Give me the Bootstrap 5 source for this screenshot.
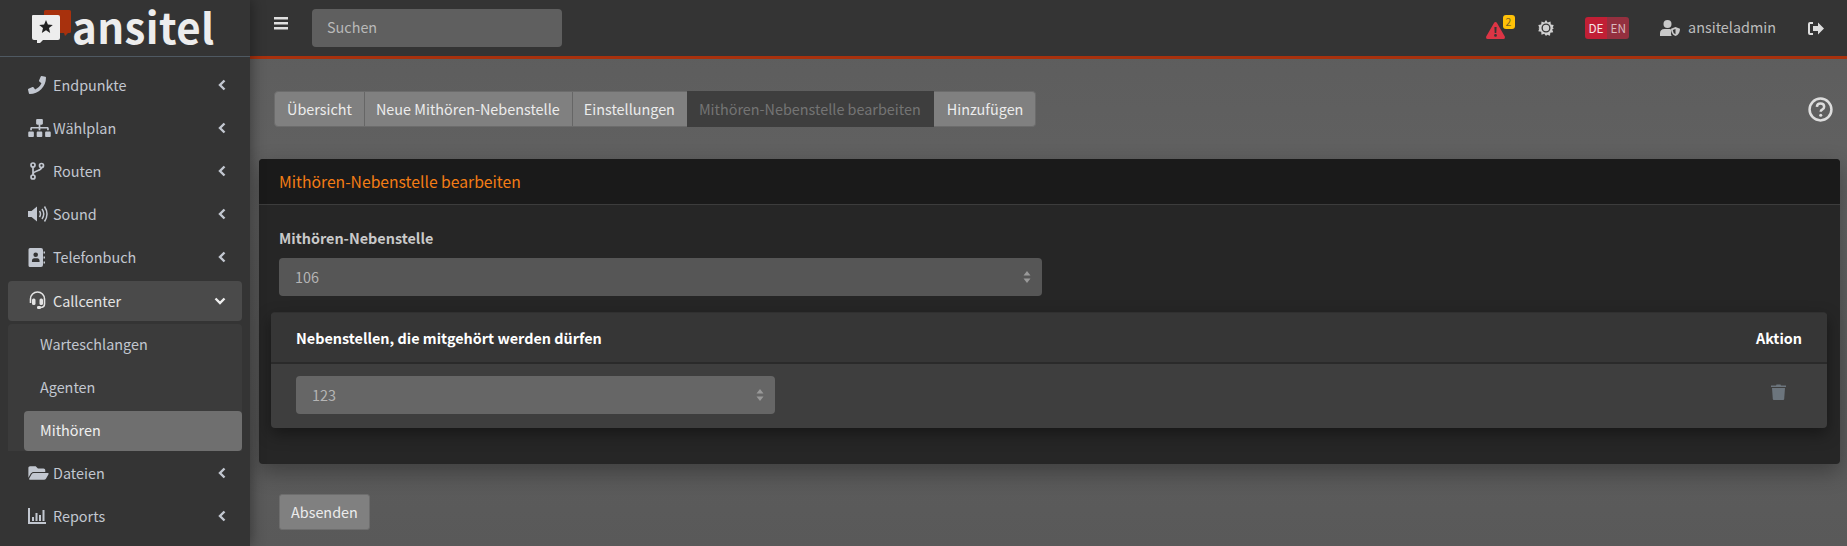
<!DOCTYPE html>
<html lang="de">
<head>
  <meta charset="UTF-8">
  <meta name="viewport" content="width=device-width, initial-scale=1.0">
  <title>Mithören-Nebenstelle bearbeiten</title>
  <link href="https://cdn.jsdelivr.net/npm/bootstrap@5.3.0/dist/css/bootstrap.min.css" rel="stylesheet">
  <style>
    html, body { height: 100%; }
    body {
      font-family: "Noto Sans CJK SC", "Noto Sans", sans-serif;
      font-size: 14.4px;
      line-height: 24px;
      background: #5e5e5e;
      color: #ddd;
      overflow: hidden;
    }
    .app-shell { display: flex; height: 546px; }

    /* sidebar */
    .side-bar {
      width: 250px;
      flex: none;
      background: #343434;
      box-shadow: 0 0 14px rgba(0, 0, 0, .45);
      position: relative;
      z-index: 2;
    }
    .brand-box {
      height: 57px;
      border-bottom: 1px solid #4f5962;
      display: flex;
      align-items: flex-start;
      padding: 10px 0 0 32px;
    }
    .brand-text {
      font-size: 42px;
      line-height: 50px;
      font-weight: 700;
      color: #ededed;
      letter-spacing: .4px;
      margin: -9px 0 0 1px;
    }
    .side-menu { padding: 8px 8px 0; }
    .side-link {
      display: flex;
      align-items: center;
      height: 40px;
      margin-bottom: 3.2px;
      padding: 0 16px 1px 20px;
      border-radius: 4px;
      color: #c2c7d0;
      text-decoration: none;
    }
    .side-link.is-open { background: #4a4a4a; color: #e4e4e4; padding-bottom: 0; }
    .side-ico { width: 25px; flex: none; display: flex; justify-content: flex-start; }
    .side-ico svg { fill: #c2c7d0; }
    .side-caret { margin-left: auto; }
    .sub-menu { background: #3b3b3b; border-radius: 4px 4px 0 0; }
    .sub-link { padding-left: 16px; margin-left: 16px; }
    .sub-link.is-active { background: #6f6f6f; color: #f0f0f0; margin-bottom: 0; }
    .sub-wrap { margin-bottom: 2.5px; }

    /* top bar */
    .main-col { flex: 1; min-width: 0; background: linear-gradient(#5c5c5c, #626262 40%, #595959); }
    .top-bar {
      height: 59px;
      background: #343434;
      border-bottom: 3px solid #a8310d;
      padding: 0 0 0 24px;
    }
    .menu-btn { width: 14px; margin-top: -9px; }
    .search-input.form-control {
      width: 250px;
      height: 38px;
      margin-left: 24px;
      background: #5f5f5f;
      border: 0;
      border-radius: 4px;
      color: #ccc;
      padding: 0 15px 3px;
      font-size: 14.4px;
    }
    .search-input.form-control::placeholder { color: #b9b9b9; opacity: 1; }
    .alert-box { position: relative; width: 29px; height: 22px; margin-top: 2px; }
    .alert-count {
      position: absolute;
      left: 17px;
      top: -3px;
      width: 12px;
      height: 14px;
      background: #ffc107;
      border-radius: 3px;
      color: #7a6320;
      font-size: 10.5px;
      line-height: 14px;
      text-align: center;
    }
    .gear-ico { margin-left: 23px; }
    .lang-pick { display: flex; height: 22px; border-radius: 3px; overflow: hidden; font-size: 11.8px; line-height: 21px; margin-left: 31px; }
    .lang-pick span { display: block; padding: 0 3px 0 4px; }
    .lang-on { background: #c11f35; color: #f5e6e8; }
    .lang-off { background: #94303f; color: #d9b9be; }
    .user-ico { margin-left: 31px; }
    .user-name { color: #bdbdbd; margin: -2px 0 0 8px; }
    .logout-ico { margin: 0 23px 0 32px; }

    /* content */
    .page-body { padding: 32px 7px 0 9px; }
    .tab-row { display: flex; align-items: center; justify-content: space-between; padding: 0 7px 0 15px; height: 36px; }
    .step-btn.btn {
      background: #808080;
      border: 1px solid #6c6c6c;
      border-left: 0;
      color: #ececec;
      font-size: 14.4px;
      line-height: 24px;
      padding: 5px 12px;
      height: 36px;
      border-radius: 0;
      box-shadow: inset 1px 0 0 #666;
    }
    .step-btn.btn:first-child { border-radius: 4px 0 0 4px; border-left: 1px solid #6c6c6c; box-shadow: none; }
    .step-btn.btn:last-child { border-radius: 0 4px 4px 0; padding: 5px 12px 5px 13px; box-shadow: none; }
    .step-btn.is-current.btn { background: #3e3e3e; color: #747474; border: 0; opacity: 1; padding: 6px 14px 6px 12px; box-shadow: none; }
    .edit-card.card {
      margin-top: 32px;
      height: 305px;
      background: #262626;
      border: 0;
      border-radius: 4px;
      box-shadow: 0 8px 22px rgba(0, 0, 0, .32);
    }
    .edit-card .card-header {
      height: 46px;
      background: #1a1a1a;
      border-bottom: 1px solid #3c3c3c;
      color: #f47d15;
      font-size: 15.7px;
      padding: 0 20px;
      line-height: 45px;
      border-radius: 4px 4px 0 0;
    }
    .edit-card .card-body { padding: 22px 13px 0 12px; }
    .field-box { padding: 0 8px; }
    .field-label { display: block; color: #c9c9c9; font-weight: 700; line-height: 22px; margin-bottom: 9px; }
    .dark-select.form-select {
      height: 38px;
      border: 0;
      border-radius: 4px;
      color: #b5b5b5;
      font-size: 14.4px;
      padding: 0 30px 0 16px;
      background-size: 8px 12px;
      background-position: right 11px center;
      background-image: url("data:image/svg+xml,%3csvg xmlns='http://www.w3.org/2000/svg' viewBox='0 0 8 12'%3e%3cpath fill='%23999' d='M4 0l3.500 4.600h-7zM4 12L.5 7.400h7z'/%3e%3c/svg%3e");
    }
    .select-main { width: 763px; background-color: #565656; }
    .select-row { width: 479px; background-color: #666; }
    .ext-table {
      margin-top: 16px;
      height: 116px;
      background: #3e3e3e;
      border-radius: 4px;
      box-shadow: 0 6px 16px rgba(0, 0, 0, .4);
      border-top: 1px solid #303030;
    }
    .ext-head {
      height: 51px;
      background: #363636;
      border-bottom: 2px solid #2a2a2a;
      padding: 0 25px;
      color: #fff;
      font-weight: 700;
      border-radius: 4px 4px 0 0;
    }
    .ext-row { padding: 12px 41px 0 25px; }
    .send-btn.btn {
      margin: 30px 0 0 20px;
      background: #808080;
      border: 1px solid #6e6e6e;
      color: #ececec;
      font-size: 14.4px;
      line-height: 24px;
      padding: 5px 11px;
      border-radius: 3px;
    }
  </style>
</head>
<body>

<div class="app-shell">
  <!-- Sidebar -->
  <aside class="side-bar">
    <div class="brand-box">
      <svg width="39" height="33" viewBox="0 0 39 33">
        <path fill="#a8310d" d="M12 1.500Q12 0 13.500 0h24Q39 0 39 1.500v20q0 1.500-1.500 1.500H36l-3 3-1-3H12z"/>
        <path fill="#ededed" d="M1 6h25q2 0 2 2v21q0 2-2 2H11l-6 6v-6H2q-2 0-2-2V7q0-1 1-1z" transform="translate(0 -1)"/>
        <path fill="#222" d="M14 10l1.900 4.600 4.900.4-3.800 3.100 1.200 4.800-4.200-2.600-4.200 2.600 1.200-4.800L7.200 15l4.900-.4z"/>
      </svg>
      <span class="brand-text">ansitel</span>
    </div>
    <nav class="side-menu">
      <a class="side-link" href="#">
        <span class="side-ico"><svg width="18" height="18" viewBox="0 0 512 512"><path d="M493.400 24.600l-104-24c-11.300-2.600-22.900 3.300-27.500 13.900l-48 112c-4.200 9.800-1.400 21.300 6.900 28l60.600 49.600c-36 76.700-98.900 140.500-177.200 177.200l-49.600-60.600c-6.800-8.300-18.200-11.100-28-6.900l-112 48C3.900 366.500-2 378.100.6 389.400l24 104C27.100 504.200 36.700 512 48 512c256.100 0 464-207.500 464-464 0-11.200-7.700-20.900-18.600-23.400z"/></svg></span>
        Endpunkte
        <svg class="side-caret" width="8" height="12" viewBox="0 0 8 12"><path d="M6.500 1.500L2 6l4.500 4.500" fill="none" stroke="#c2c7d0" stroke-width="2.400"/></svg>
      </a>
      <a class="side-link" href="#">
        <span class="side-ico"><svg width="23" height="18" viewBox="0 0 640 512"><path d="M128 352H32c-17.670 0-32 14.330-32 32v96c0 17.670 14.330 32 32 32h96c17.670 0 32-14.330 32-32v-96c0-17.670-14.330-32-32-32zm-24-80h192v48h48v-48h192v48h48v-57.590c0-21.170-17.230-38.410-38.410-38.410H344v-64h40c17.670 0 32-14.330 32-32V32c0-17.670-14.330-32-32-32H256c-17.670 0-32 14.330-32 32v96c0 17.670 14.330 32 32 32h40v64H94.410C73.230 224 56 241.230 56 262.410V320h48v-48zm264 80h-96c-17.670 0-32 14.330-32 32v96c0 17.670 14.330 32 32 32h96c17.670 0 32-14.330 32-32v-96c0-17.670-14.330-32-32-32zm240 0h-96c-17.670 0-32 14.330-32 32v96c0 17.670 14.330 32 32 32h96c17.670 0 32-14.330 32-32v-96c0-17.670-14.330-32-32-32z"/></svg></span>
        Wählplan
        <svg class="side-caret" width="8" height="12" viewBox="0 0 8 12"><path d="M6.500 1.500L2 6l4.500 4.500" fill="none" stroke="#c2c7d0" stroke-width="2.400"/></svg>
      </a>
      <a class="side-link" href="#">
        <span class="side-ico"><svg width="18" height="20" viewBox="0 0 18 18"><g fill="none" stroke="#c2c7d0" stroke-width="1.700"><circle cx="5" cy="3" r="2"/><circle cx="5" cy="15" r="2"/><circle cx="13.500" cy="3.500" r="2"/><path d="M5 5v8M13.500 5.500c0 4-8.500 2.500-8.500 7"/></g></svg></span>
        Routen
        <svg class="side-caret" width="8" height="12" viewBox="0 0 8 12"><path d="M6.500 1.500L2 6l4.500 4.500" fill="none" stroke="#c2c7d0" stroke-width="2.400"/></svg>
      </a>
      <a class="side-link" href="#">
        <span class="side-ico"><svg width="21" height="18" viewBox="0 0 21 18"><path d="M0 6h3.500L9 1.500v15L3.500 12H0z"/><g fill="none" stroke="#c2c7d0" stroke-width="1.500"><path d="M11.500 6q2 3 0 6M14 4q3.500 5 0 10M16.500 1.500q5 7.500 0 15"/></g></svg></span>
        Sound
        <svg class="side-caret" width="8" height="12" viewBox="0 0 8 12"><path d="M6.500 1.500L2 6l4.500 4.500" fill="none" stroke="#c2c7d0" stroke-width="2.400"/></svg>
      </a>
      <a class="side-link" href="#">
        <span class="side-ico"><svg width="17" height="19" viewBox="0 0 17 19"><path fill-rule="evenodd" d="M2 0h11q2 0 2 2v15q0 2-2 2H2q-1.500 0-1.500-1.500v-16Q.5 0 2 0zM7.700 4.500a2.300 2.300 0 1 0 0 4.600 2.300 2.300 0 0 0 0-4.600zM4 14h7.500q.5-3.800-2-3.800H6q-2.500 0-2 3.800z"/><path d="M15.500 3.500H17v2h-1.500zM15.500 8.500H17v2h-1.500zM15.500 13.500H17v2h-1.500z"/></svg></span>
        Telefonbuch
        <svg class="side-caret" width="8" height="12" viewBox="0 0 8 12"><path d="M6.500 1.500L2 6l4.500 4.500" fill="none" stroke="#c2c7d0" stroke-width="2.400"/></svg>
      </a>
      <a class="side-link is-open" href="#">
        <span class="side-ico"><svg width="19" height="19" viewBox="0 0 19 19"><path d="M2.500 12V8a7 7 0 0 1 14 0v5q0 3.500-4.500 3.500" fill="none" stroke="#e4e4e4" stroke-width="1.600"/><rect x="4" y="7.500" width="3.500" height="6.500" rx="1.500" fill="#e4e4e4"/><rect x="11.500" y="7.500" width="3.500" height="6.500" rx="1.500" fill="#e4e4e4"/><rect x="9" y="15" width="4" height="3" rx="1.200" fill="#e4e4e4"/></svg></span>
        Callcenter
        <svg class="side-caret" width="12" height="8" viewBox="0 0 12 8"><path d="M1.500 1.500L6 6l4.500-4.500" fill="none" stroke="#eee" stroke-width="2.400"/></svg>
      </a>
      <div class="sub-wrap">
        <div class="sub-menu">
          <a class="side-link sub-link" href="#">Warteschlangen</a>
          <a class="side-link sub-link" href="#">Agenten</a>
          <a class="side-link sub-link is-active" href="#">Mithören</a>
        </div>
      </div>
      <a class="side-link" href="#">
        <span class="side-ico"><svg width="21" height="18" viewBox="0 0 576 512"><path d="M572.694 292.093L500.270 416.248A63.997 63.997 0 0 1 444.989 448H45.025c-18.523 0-30.064-20.093-20.731-36.093l72.424-124.155A64 64 0 0 1 152 256h399.964c18.523 0 30.064 20.093 20.730 36.093zM152 224h328v-48c0-26.510-21.490-48-48-48H272l-64-64H48C21.490 64 0 85.490 0 112v278.046l69.077-118.418C86.214 242.250 117.989 224 152 224z"/></svg></span>
        Dateien
        <svg class="side-caret" width="8" height="12" viewBox="0 0 8 12"><path d="M6.500 1.500L2 6l4.500 4.500" fill="none" stroke="#c2c7d0" stroke-width="2.400"/></svg>
      </a>
      <a class="side-link" href="#">
        <span class="side-ico"><svg width="18" height="16" viewBox="0 0 18 16"><path d="M0 0h2v14h16v2H0zM4 9h2v4H4zM7.500 5h2v8h-2zM11 7h2v6h-2zM14.500 2h2v11h-2z"/></svg></span>
        Reports
        <svg class="side-caret" width="8" height="12" viewBox="0 0 8 12"><path d="M6.500 1.500L2 6l4.500 4.500" fill="none" stroke="#c2c7d0" stroke-width="2.400"/></svg>
      </a>
    </nav>
  </aside>

  <div class="main-col">
    <!-- Top bar -->
    <header class="top-bar d-flex align-items-center">
      <svg class="menu-btn" width="14" height="13" viewBox="0 0 14 13"><path fill="#e0e0e0" d="M0 0h14v2.500H0zM0 5h14v2.500H0zM0 10h14v2.500H0z"/></svg>
      <input class="form-control search-input" type="text" placeholder="Suchen">
      <div class="ms-auto d-flex align-items-center">
        <div class="alert-box">
          <svg width="19" height="17" viewBox="0 0 19 17" class="d-block mt-1"><path fill="#dc3545" fill-rule="evenodd" d="M9.500 0q1 0 1.500 1l7.800 13.500q.6 2.500-1.500 2.500H1.700q-2.100 0-1.500-2.500L8 1q.5-1 1.500-1zM8.400 5l.3 6h1.600l.3-6zM9.500 12a1.400 1.400 0 1 0 0 2.800 1.400 1.400 0 0 0 0-2.800z"/></svg>
          <span class="alert-count">2</span>
        </div>
        <svg class="gear-ico" width="16" height="16" viewBox="0 0 16 16"><path fill="#d0d0d0" fill-rule="evenodd" d="M8 0l1.700 2.500 2.800-1 .3 3 2.900.5-1 2.800L16 8l-1.800 1.500 1 2.700-2.900.6-.3 2.900-2.800-1L8 16l-1.700-2.300-2.800 1-.3-2.900-2.900-.6 1-2.700L0 8l1.300-.2-1-2.800 2.900-.5.3-3 2.800 1zM8 3.500a4.500 4.500 0 1 0 0 9 4.500 4.500 0 0 0 0-9z"/><circle cx="8" cy="8" r="3.200" fill="#d0d0d0"/></svg>
        <div class="lang-pick"><span class="lang-on">DE</span><span class="lang-off">EN</span></div>
        <svg class="user-ico" width="20" height="16" viewBox="0 0 20 16"><circle cx="7.500" cy="4" r="4" fill="#c8c8c8"/><path fill="#c8c8c8" d="M0 16v-2.500Q0 9 4.500 9h5.500q1 0 1 1v4q0 1 .8 2z"/><path fill="#c8c8c8" d="M15.500 7l4.500 1.700q0 5.800-4.500 7.300-4.500-1.500-4.500-7.300z"/><path fill="#343434" d="M15.500 9v5.300q-2.500-1-2.700-4.400z"/></svg>
        <span class="user-name">ansiteladmin</span>
        <svg class="logout-ico" width="16" height="13" viewBox="0 0 16 13"><path fill="#ddd" d="M16 6.500L10 .5v3.500H5v5h5v3.500zM5 0H2Q0 0 0 2v9q0 2 2 2h3v-2H2V2h3z"/></svg>
      </div>
    </header>

    <main class="page-body">
      <div class="tab-row">
        <div class="btn-group" role="group">
          <button type="button" class="btn step-btn">Übersicht</button>
          <button type="button" class="btn step-btn">Neue Mithören-Nebenstelle</button>
          <button type="button" class="btn step-btn">Einstellungen</button>
          <button type="button" class="btn step-btn is-current">Mithören-Nebenstelle bearbeiten</button>
          <button type="button" class="btn step-btn">Hinzufügen</button>
        </div>
        <svg width="25" height="25" viewBox="0 0 24 24"><circle cx="12" cy="12" r="10.500" fill="none" stroke="#ddd" stroke-width="2.400"/><path d="M8.500 9.500Q8.800 6.300 12 6.300q3.500 0 3.500 3 0 1.900-1.900 2.800-1.400.7-1.400 2" fill="none" stroke="#ddd" stroke-width="2.400"/><circle cx="12.200" cy="17.500" r="1.500" fill="#ddd"/></svg>
      </div>

      <section class="card edit-card">
        <div class="card-header">Mithören-Nebenstelle bearbeiten</div>
        <div class="card-body">
          <div class="field-box">
            <label class="field-label">Mithören-Nebenstelle</label>
            <select class="form-select dark-select select-main"><option>106</option></select>
          </div>
          <div class="ext-table">
            <div class="ext-head d-flex align-items-center justify-content-between">
              <span>Nebenstellen, die mitgehört werden dürfen</span>
              <span>Aktion</span>
            </div>
            <div class="ext-row d-flex align-items-start justify-content-between">
              <select class="form-select dark-select select-row"><option>123</option></select>
              <svg class="mt-2" width="15" height="16" viewBox="0 0 15 16"><path fill="#6c757d" d="M0 1.500h5L5.500.5h4l.5 1h5v1.500H0zM1 4h13l-.8 11q-.1 1-1 1H2.800q-.9 0-1-1z"/></svg>
            </div>
          </div>
        </div>
      </section>

      <button type="button" class="btn send-btn">Absenden</button>
    </main>
  </div>
</div>

<script src="https://cdn.jsdelivr.net/npm/bootstrap@5.3.0/dist/js/bootstrap.bundle.min.js"></script>
</body>
</html>
